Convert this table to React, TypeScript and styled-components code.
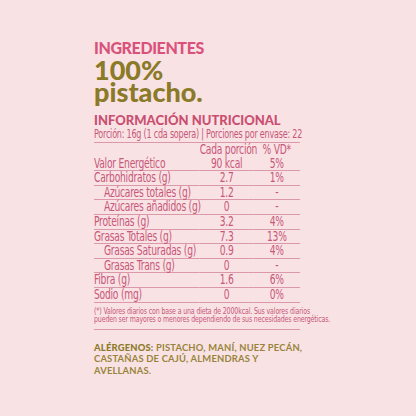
import styled, { createGlobalStyle } from "styled-components";

const GlobalStyle = createGlobalStyle`
  html, body {
    margin: 0;
    padding: 0;
    background: #f9e2e4;
  }
`;

const Page = styled.div`
  width: 416px;
  height: 416px;
  box-sizing: border-box;
  padding: 38px 0 0 94px;
  background: #f9e2e4;
  overflow: hidden;
`;

const Panel = styled.div`
  width: 206px;
  display: flex;
  flex-direction: column;
`;

const Kicker = styled.h2`
  margin: 0 0 2px;
  font-family: "Lato", sans-serif;
  font-weight: 900;
  font-size: 16px;
  line-height: 19px;
  letter-spacing: -0.4px;
  color: #d9527c;
`;

const Title = styled.h1`
  margin: 0;
  font-family: "Lato", sans-serif;
  font-weight: 900;
  font-size: 27px;
  line-height: 22px;
  color: #8b7a28;
`;

const TitleLine = styled.span`
  display: block;
  height: 22px;
`;

const SectionTitle = styled.h3`
  margin: 10px 0 0;
  font-family: "Lato", sans-serif;
  font-weight: 900;
  font-size: 13px;
  line-height: 15px;
  color: #c94f70;
`;

// the nutrition block uses a narrow face: DejaVu condensed, squeezed further
const Narrow = styled.div`
  width: 271px;
  transform: scaleX(0.76);
  transform-origin: left top;
  font-family: "DejaVu Sans Condensed", "DejaVu Sans", sans-serif;
  font-stretch: condensed;
  color: #c75779;
`;

const Serving = styled.div`
  font-size: 11.8px;
  line-height: 12px;
  letter-spacing: -0.3px;
  padding-bottom: 2px;
  border-bottom: 1px solid #dc98ab;
  white-space: nowrap;
`;

const Table = styled.div`
  display: grid;
  grid-template-columns: 139px 71px 61px;
  font-size: 13.4px;
  letter-spacing: -0.3px;
`;

const Cell = styled.div<{ $indent?: boolean; $center?: boolean; $line?: boolean }>`
  height: 13.6px;
  line-height: 14px;
  white-space: nowrap;
  padding-left: ${(p) => (p.$indent ? "13px" : "0")};
  text-align: ${(p) => (p.$center ? "center" : "left")};
  border-bottom: ${(p) => (p.$line ? "1px solid #dc98ab" : "none")};
`;

const Footnote = styled.p`
  margin: 4px 0 0;
  font-size: 9.2px;
  line-height: 8px;
  letter-spacing: -0.2px;
  white-space: nowrap;
`;

const Rule = styled.hr`
  margin: 6px 0 0;
  width: 271px;
  border: none;
  border-top: 1px solid #dc98ab;
`;

const Allergens = styled.p`
  margin: 12px 0 0;
  font-family: "Lato", sans-serif;
  font-weight: 700;
  font-size: 9.4px;
  line-height: 11.6px;
  letter-spacing: 0.2px;
  color: #98843a;
  white-space: nowrap;
  strong {
    font-weight: 900;
    color: #8b7a28;
  }
`;

interface Row {
  label: string;
  value: string;
  vd: string;
  sub?: boolean;
}

const rows: Row[] = [
  { label: "Valor Energético", value: "90 kcal", vd: "5%" },
  { label: "Carbohidratos (g)", value: "2.7", vd: "1%" },
  { label: "Azúcares totales (g)", value: "1.2", vd: "-", sub: true },
  { label: "Azúcares añadidos (g)", value: "0", vd: "-", sub: true },
  { label: "Proteínas (g)", value: "3.2", vd: "4%" },
  { label: "Grasas Totales (g)", value: "7.3", vd: "13%" },
  { label: "Grasas Saturadas (g)", value: "0.9", vd: "4%", sub: true },
  { label: "Grasas Trans (g)", value: "0", vd: "-", sub: true },
  { label: "Fibra (g)", value: "1.6", vd: "6%" },
  { label: "Sodio (mg)", value: "0", vd: "0%" },
];

function App() {
  return (
    <Page>
      <GlobalStyle />
      <Panel>
        <Kicker>INGREDIENTES</Kicker>
        <Title>
          <TitleLine>100%</TitleLine>
          <TitleLine>pistacho.</TitleLine>
        </Title>
        <SectionTitle>INFORMACIÓN NUTRICIONAL</SectionTitle>
        <Narrow>
          <Serving>Porción: 16g (1 cda sopera) | Porciones por envase: 22</Serving>
          <Table>
            <Cell />
            <Cell $center>Cada porción</Cell>
            <Cell $center>% VD*</Cell>
            {rows.map((r) => [
              <Cell key={r.label + "l"} $line $indent={r.sub}>{r.label}</Cell>,
              <Cell key={r.label + "v"} $line $center>{r.value}</Cell>,
              <Cell key={r.label + "d"} $line $center>{r.vd}</Cell>,
            ])}
          </Table>
          <Footnote>
            (*) Valores diarios con base a una dieta de 2000kcal. Sus valores diarios
            <br />
            pueden ser mayores o menores dependiendo de sus necesidades energéticas.
          </Footnote>
          <Rule />
        </Narrow>
        <Allergens>
          <strong>ALÉRGENOS:</strong> PISTACHO, MANÍ, NUEZ PECÁN,
          <br />
          CASTAÑAS DE CAJÚ, ALMENDRAS Y
          <br />
          AVELLANAS.
        </Allergens>
      </Panel>
    </Page>
  );
}

export default App;
